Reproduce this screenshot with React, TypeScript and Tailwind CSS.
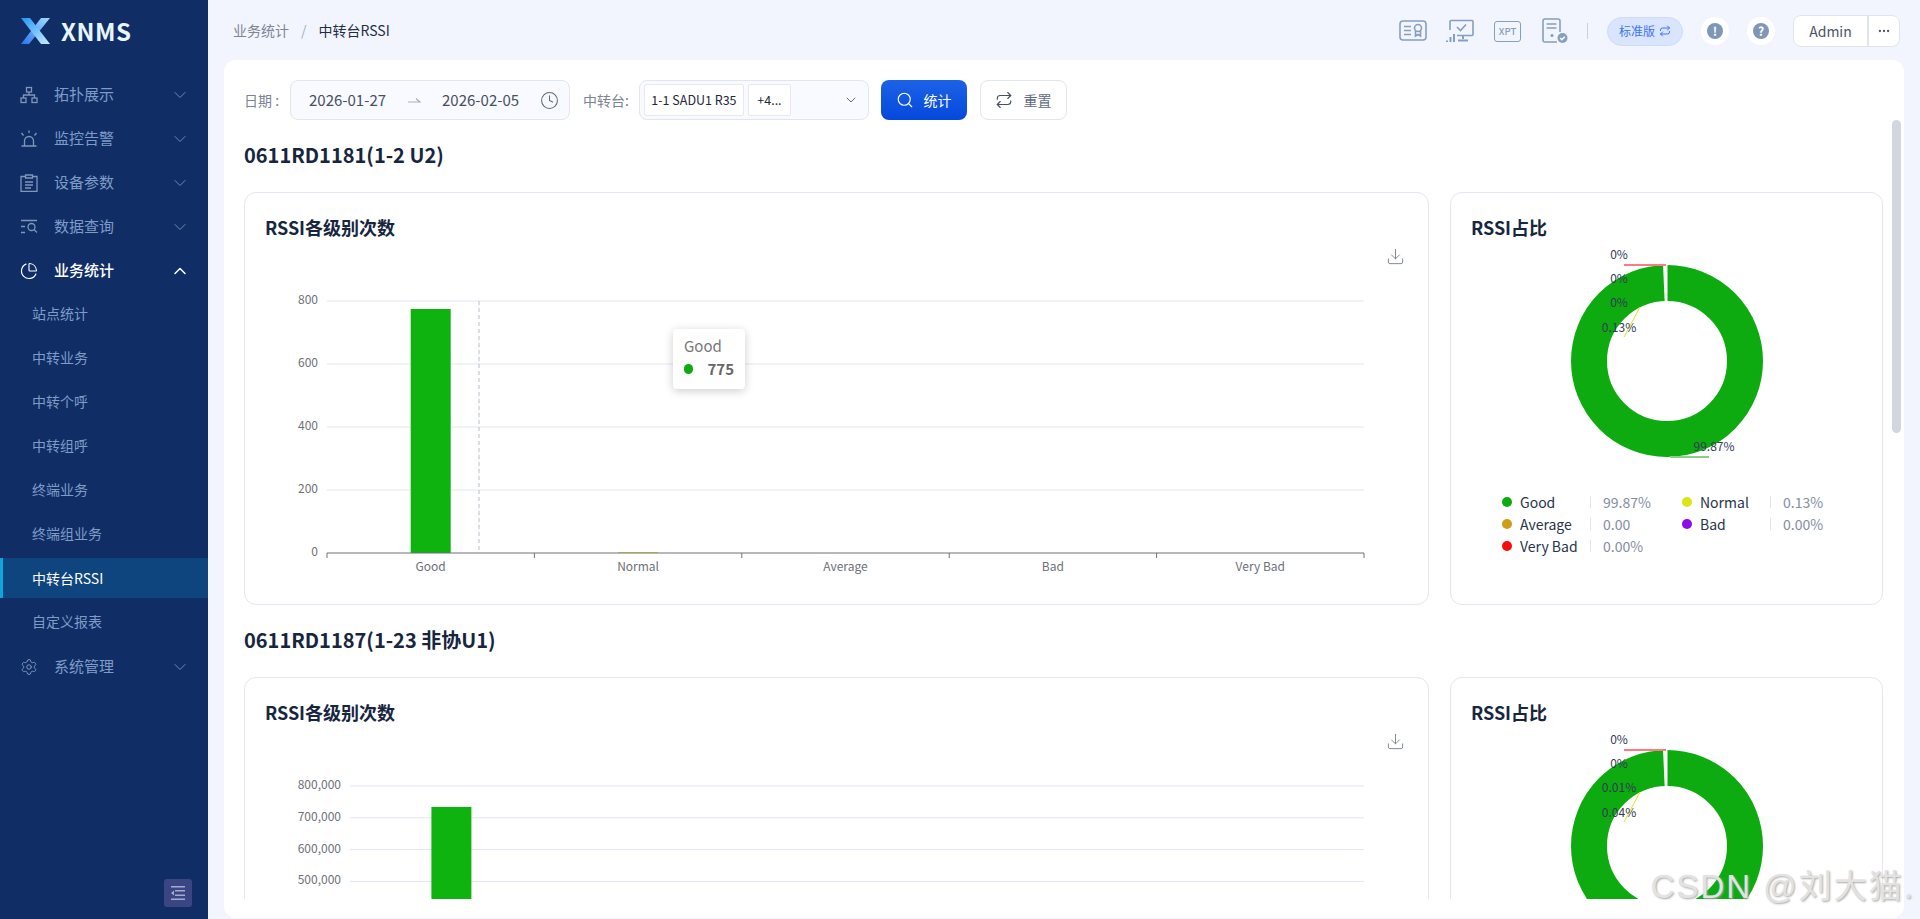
import { ChartPie, ChevronDown, ChevronUp, Clock, Download, Ellipsis, Repeat, Search, Settings } from "lucide-react"

const GREEN = "#0fb30f"

function TopologyIcon() {
  return (
    <svg width="18" height="18" viewBox="0 0 18 18" fill="none" stroke="currentColor" strokeWidth="1.3">
      <rect x="6.5" y="1.5" width="5" height="4.5" />
      <rect x="1" y="12" width="5" height="4.5" />
      <rect x="12" y="12" width="5" height="4.5" />
      <path d="M9 6v3M3.5 12V9h11v3" />
    </svg>
  )
}

function AlarmIcon() {
  return (
    <svg width="18" height="18" viewBox="0 0 18 18" fill="none" stroke="currentColor" strokeWidth="1.3">
      <path d="M4.5 15.5V11a4.5 4.5 0 0 1 9 0v4.5M1.5 16h15M9 .5v2.5M1.5 3l2 2.5M16.5 3l-2 2.5" />
    </svg>
  )
}

function ParamsIcon() {
  return (
    <svg width="18" height="18" viewBox="0 0 18 18" fill="none" stroke="currentColor" strokeWidth="1.3">
      <path d="M5.5 2.5H1v15h16v-15h-4.500M5.500 1h7v3h-7zM5 8h8M5 11h8M5 14h6" />
    </svg>
  )
}

function QueryIcon() {
  return (
    <svg width="18" height="18" viewBox="0 0 18 18" fill="none" stroke="currentColor" strokeWidth="1.3">
      <path d="M1 2.500h16M1 8.500h4M1 14.500h4" />
      <circle cx="11.500" cy="9" r="3.500" />
      <path d="M14 11.500l3 3" />
    </svg>
  )
}

function CollapseIcon() {
  return (
    <svg width="16" height="14" viewBox="0 0 16 14" fill="#a3acd0">
      <rect x="1" y="0" width="14" height="1.500" />
      <rect x="5" y="4" width="10" height="1.500" />
      <rect x="5" y="8.500" width="10" height="1.500" />
      <rect x="1" y="12.500" width="14" height="1.500" />
      <path d="M1 7l3-2.500v5z" />
    </svg>
  )
}

function CertIcon() {
  return (
    <svg width="28" height="22" viewBox="0 0 28 22" fill="none" stroke="#84a0c0" strokeWidth="1.600">
      <rect x="1" y="1" width="26" height="19" rx="3" />
      <path d="M5 6.500h7M5 10.500h7M5 14.500h7" />
      <circle cx="19" cy="8" r="3.500" />
      <path d="M16.500 11v5l2.500-1.500 2.500 1.500v-5" />
    </svg>
  )
}

function MonitorIcon() {
  return (
    <svg width="28" height="24" viewBox="0 0 28 24" fill="none" stroke="#84a0c0" strokeWidth="1.600">
      <path d="M4 11V2.500a1 1 0 0 1 1-1h21a1 1 0 0 1 1 1v13a1 1 0 0 1-1 1H11" />
      <path d="M11 8l3.500 3.500L20 5.500" />
      <path d="M17 17v3M12 21.500h10" strokeWidth="2" />
      <path d="M1 21.500v1.500M4.500 18v5M8 15v8" strokeWidth="2" />
    </svg>
  )
}

function XptIcon() {
  return (
    <div className="flex h-[21px] w-[27px] items-center justify-center rounded-[3px] border-[1.5px] border-[#84a0c0] text-[9.5px] font-medium text-[#84a0c0]">
      XPT
    </div>
  )
}

function ServerCheckIcon() {
  return (
    <svg width="26" height="26" viewBox="0 0 26 26" fill="none" stroke="#84a0c0" strokeWidth="1.600">
      <path d="M15 24H3a2 2 0 0 1-2-2V3a2 2 0 0 1 2-2h13a2 2 0 0 1 2 2v11" />
      <path d="M4.500 6h10M4.500 10h10" />
      <circle cx="10" cy="17.500" r="0.800" fill="#84a0c0" />
      <circle cx="20.500" cy="20" r="5" fill="#84a0c0" stroke="none" />
      <path d="M18.200 20l1.700 1.700 2.800-3" stroke="#fff" />
    </svg>
  )
}

function RoundIconButton({ mark }: { mark: "info" | "help" }) {
  return (
    <div className="flex h-7 w-7 items-center justify-center rounded-full bg-white">
      <div className="flex h-4 w-4 items-center justify-center rounded-full bg-[#7f97b7] text-[12px] leading-none font-bold text-white">
        {mark === "info" ? "!" : "?"}
      </div>
    </div>
  )
}

const menu = [
  { label: "拓扑展示", icon: <TopologyIcon /> },
  { label: "监控告警", icon: <AlarmIcon /> },
  { label: "设备参数", icon: <ParamsIcon /> },
  { label: "数据查询", icon: <QueryIcon /> },
]

const subMenu = ["站点统计", "中转业务", "中转个呼", "中转组呼", "终端业务", "终端组业务", "中转台RSSI", "自定义报表"]

function MenuItem({ label, icon }: { label: string; icon: React.ReactNode }) {
  return (
    <div className="flex h-11 items-center pr-[18px] pl-[20px] text-[15px] text-[#7f9cc6]">
      <span className="flex w-[18px] justify-center text-[#8097b8]">{icon}</span>
      <span className="ml-[16px] flex-1 pb-0.5">{label}</span>
      <ChevronDown size={20} strokeWidth={1.2} className="text-[#7288ad]" />
    </div>
  )
}

function Sidebar() {
  return (
    <aside className="flex h-full w-[208px] shrink-0 flex-col bg-[#102d66]">
      <div className="flex h-[73px] items-start pt-[18px] pl-[21px]">
        <svg width="29" height="26" viewBox="0 0 29 26">
          <defs>
            <linearGradient id="logoA" x1="0" y1="0" x2="1" y2="1">
              <stop offset="0" stopColor="#2196f5" />
              <stop offset="1" stopColor="#c8ecff" />
            </linearGradient>
            <linearGradient id="logoB" x1="1" y1="0" x2="0" y2="1">
              <stop offset="0" stopColor="#9fdcff" />
              <stop offset="1" stopColor="#2a74f0" />
            </linearGradient>
          </defs>
          <polygon points="29,0 20,0 0,26 8,26" fill="url(#logoB)" />
          <polygon points="0,0 9,0 29,26 20,26" fill="url(#logoA)" />
        </svg>
        <span className="ml-[11px] text-[24px] leading-[26px] font-bold tracking-[0.5px] text-[#e6f5ff]">XNMS</span>
      </div>

      {menu.map((item) => (
        <MenuItem key={item.label} {...item} />
      ))}

      <div className="flex h-11 items-center pr-[18px] pl-[20px] text-[15px] font-medium text-white">
        <ChartPie size={18} strokeWidth={1.5} />
        <span className="ml-[16px] flex-1 pb-0.5">业务统计</span>
        <ChevronUp size={20} strokeWidth={1.8} />
      </div>

      {subMenu.map((label) =>
        label === "中转台RSSI" ? (
          <div
            key={label}
            className="mt-px mb-[3px] flex h-10 items-center border-l-[3px] border-[#0ea5d8] bg-[#0f457f] pl-[29px] text-[14px] text-white"
          >
            {label}
          </div>
        ) : (
          <div key={label} className="flex h-11 items-center pb-1 pl-[32px] text-[14px] text-[#7f9cc6]">
            {label}
          </div>
        ),
      )}

      <MenuItem label="系统管理" icon={<Settings size={18} strokeWidth={1.3} />} />

      <div className="mt-auto mr-4 mb-3 flex h-7 w-7 items-center justify-center self-end rounded-[3px] bg-[#3a4583]">
        <CollapseIcon />
      </div>
    </aside>
  )
}

function Header() {
  return (
    <header className="flex h-[60px] shrink-0 items-center pr-5 pl-[25px] text-[14px]">
      <span className="text-[#7d8694]">业务统计</span>
      <span className="mx-[12px] text-[#a8aeb9]">/</span>
      <span className="text-[#1f2d44]">中转台RSSI</span>

      <div className="ml-auto flex items-center pt-0.5">
        <CertIcon />
        <span className="ml-[19px]">
          <MonitorIcon />
        </span>
        <span className="ml-[20px]">
          <XptIcon />
        </span>
        <span className="ml-[21px]">
          <ServerCheckIcon />
        </span>
        <span className="mx-[19px] h-4 w-px bg-[#c5d0e0]" />
        <div className="flex h-[29px] w-[76px] items-center justify-center gap-1 rounded-full border border-[#cfdcf7] bg-[#d9e5fd] text-[12px] text-[#3f74f0]">
          标准版
          <Repeat size={12} strokeWidth={2} />
        </div>
        <span className="ml-[18px]">
          <RoundIconButton mark="info" />
        </span>
        <span className="ml-[18px]">
          <RoundIconButton mark="help" />
        </span>
        <div className="ml-[18px] flex h-8 w-[107px] overflow-hidden rounded-lg border border-[#dfe4ef] bg-white text-[14px] text-[#4b5567]">
          <span className="flex w-[75px] items-center justify-center border-r-2 border-[#dfe4ef]">Admin</span>
          <span className="flex flex-1 items-center justify-center">
            <Ellipsis size={14} />
          </span>
        </div>
      </div>
    </header>
  )
}

function FilterBar() {
  return (
    <div className="flex h-10 items-center text-[14px]">
      <span className="text-[#7c8492]">日期 :</span>
      <div className="ml-[11px] flex h-10 w-[280px] items-center rounded-lg border border-[#e0e5ef] bg-[#f8faff] pr-[10px] pl-[18px] text-[15px] text-[#46505f]">
        <span>2026-01-27</span>
        <svg className="mx-[21px]" width="14" height="8" viewBox="0 0 14 8" fill="none" stroke="#a8aeb9" strokeWidth="1.200">
          <path d="M1 6h12L9 2.500" />
        </svg>
        <span>2026-02-05</span>
        <Clock size={19} strokeWidth={1.3} className="ml-auto text-[#5f6b7c]" />
      </div>

      <span className="ml-[13px] text-[#7c8492]">中转台:</span>
      <div className="ml-[10px] flex h-10 w-[230px] items-center rounded-lg border border-[#e0e5ef] bg-[#f8faff] pr-[9px] pl-1 text-[12.5px] text-[#1f2937]">
        <span className="flex h-8 w-[100px] items-center justify-center rounded-[2px] border border-[#e6e9f1] bg-white">
          1-1 SADU1 R35
        </span>
        <span className="ml-1 flex h-8 w-[43px] items-center justify-center rounded-[2px] border border-[#e6e9f1] bg-white">
          +4...
        </span>
        <ChevronDown size={16} strokeWidth={1.5} className="ml-auto text-[#5f6b7c]" />
      </div>

      <button className="ml-3 flex h-10 w-[86px] items-center justify-center gap-[9px] rounded-lg bg-gradient-to-b from-[#1c62e6] to-[#0548dc] text-[14px] text-white">
        <Search size={18} strokeWidth={1.5} />
        统计
      </button>
      <button className="ml-[13px] flex h-10 w-[87px] items-center justify-center gap-[10px] rounded-lg border border-[#e0e5ef] bg-white text-[14px] text-[#5f6b7c]">
        <Repeat size={18} strokeWidth={1.5} className="text-[#46505f]" />
        重置
      </button>
    </div>
  )
}

const categories = ["Good", "Normal", "Average", "Bad", "Very Bad"]
const CHART_RIGHT = 1119

// full chart with its x axis
function BarChart({ ticks, step, axisX, barY, showPointer }: { ticks: string[]; step: number; axisX: number; barY: number; showPointer?: boolean }) {
  const top = 49
  const band = (CHART_RIGHT - axisX) / categories.length
  const baseY = top + step * (ticks.length - 1)
  return (
    <svg width="1183" height="352" viewBox="0 0 1183 352" className="block">
      {ticks.map((t, i) => {
        const y = top + step * i
        return (
          <g key={t}>
            {i < ticks.length - 1 && <line x1={axisX} x2={CHART_RIGHT} y1={y} y2={y} stroke="#e0e6f1" />}
            <text x={axisX - 9} y={y + 3} textAnchor="end" fontSize="12" fill="#6e7079">
              {t}
            </text>
          </g>
        )
      })}
      {showPointer && <line x1="234" x2="234" y1={top} y2={baseY} stroke="#b9bdcc" strokeDasharray="4 3" />}
      <rect x={axisX + band / 2 - 20} y={barY} width="40" height={baseY - barY} fill={GREEN} />
      <rect x={axisX + band * 1.5 - 20} y={baseY - 1} width="40" height="1" fill="#dde516" />
      <line x1={axisX} x2={CHART_RIGHT} y1={baseY} y2={baseY} stroke="#6e7079" />
      {categories.map((c, i) => (
        <g key={c}>
          <line x1={axisX + band * i} x2={axisX + band * i} y1={baseY} y2={baseY + 5} stroke="#6e7079" />
          <text x={axisX + band * (i + 0.5)} y={baseY + 18} textAnchor="middle" fontSize="12" fill="#6e7079">
            {c}
          </text>
        </g>
      ))}
      <line x1={CHART_RIGHT} x2={CHART_RIGHT} y1={baseY} y2={baseY + 5} stroke="#6e7079" />
    </svg>
  )
}

// second chart: the page is scrolled off below 500,000, so only the top part is there
function TopOfBarChart({ ticks, step, axisX, barY }: { ticks: string[]; step: number; axisX: number; barY: number }) {
  const band = (CHART_RIGHT - axisX) / categories.length
  return (
    <svg width="1183" height="352" viewBox="0 0 1183 352" className="block">
      {ticks.map((t, i) => {
        const y = 49 + step * i
        return (
          <g key={t}>
            <line x1={axisX} x2={CHART_RIGHT} y1={y} y2={y} stroke="#e0e6f1" />
            <text x={axisX - 9} y={y + 3} textAnchor="end" fontSize="12" fill="#6e7079">
              {t}
            </text>
          </g>
        )
      })}
      <rect x={axisX + band / 2 - 20} y={barY} width="40" height={352 - barY} fill={GREEN} />
    </svg>
  )
}

function Donut({ labels, bottomLabel }: { labels: string[]; bottomLabel?: string }) {
  return (
    <svg width="431" height="232" viewBox="0 0 431 232" className="block overflow-visible">
      <circle cx="216" cy="109" r="78" fill="none" stroke="#0dab0f" strokeWidth="36" />
      <polygon points="212,12 216.500,12 216.500,50 213.700,50" fill="#fff" />
      <line x1="173" x2="215" y1="13" y2="13" stroke="#ff7a80" strokeWidth="2" />
      <line x1="173" y1="85" x2="189" y2="55" stroke="#dde516" />
      {bottomLabel && <line x1="219" x2="258" y1="205" y2="205" stroke="#86d186" strokeWidth="2" />}
      {labels.map((l, i) => (
        <text key={i} x="168" y={7 + i * 24.200} textAnchor="middle" fontSize="12" fill="#333a55">
          {l}
        </text>
      ))}
      {bottomLabel && (
        <text x="263" y="199" textAnchor="middle" fontSize="12" fill="#333a55">
          {bottomLabel}
        </text>
      )}
    </svg>
  )
}

const legend = [
  { name: "Good", color: "#0dab0f", share: "99.87%" },
  { name: "Normal", color: "#dde516", share: "0.13%" },
  { name: "Average", color: "#cf9d17", share: "0.00" },
  { name: "Bad", color: "#8b0cf0", share: "0.00%" },
  { name: "Very Bad", color: "#f60d0d", share: "0.00%" },
]

function Legend() {
  return (
    <div className="mt-[7px] grid w-[411px] grid-cols-2 pl-[51px] text-[14px] leading-[22px]">
      {legend.map((s) => (
        <div key={s.name} className="flex h-[22px] w-[180px] items-center">
          <svg width="10" height="10" viewBox="0 0 10 10" className="shrink-0">
            <circle cx="5" cy="5" r="5" fill={s.color} />
          </svg>
          <span className="ml-2 w-[70px] text-[#27344a]">{s.name}</span>
          <span className="h-3 w-px bg-[#dfe4ef]" />
          <span className="ml-3 text-[#838da3]">{s.share}</span>
        </div>
      ))}
    </div>
  )
}

function Section({ title, chart, donut, legendShown }: { title: string; chart: React.ReactNode; donut: React.ReactNode; legendShown?: boolean }) {
  return (
    <section className="mt-6">
      <h2 className="h-6 text-[20px] leading-[22px] font-semibold text-[#17263f]">{title}</h2>
      <div className="mt-6 flex gap-[21px]">
        <div className="relative h-[413px] w-[1185px] rounded-xl border border-[#e4e7f0] bg-white">
          <h3 className="h-[59px] pl-[20px] text-[18px] leading-[68px] font-semibold text-[#17263f]">RSSI各级别次数</h3>
          <Download size={19} strokeWidth={1.2} className="absolute top-[54px] right-[23px] text-[#7c8492]" />
          {chart}
        </div>

        <div className="h-[413px] w-[433px] rounded-xl border border-[#e4e7f0] bg-white">
          <h3 className="h-[59px] pl-[20px] text-[18px] leading-[68px] font-semibold text-[#17263f]">RSSI占比</h3>
          {donut}
          {legendShown && <Legend />}
        </div>
      </div>
    </section>
  )
}

function Tooltip() {
  return (
    <div className="absolute top-[136px] left-[428px] h-[60px] w-[72px] rounded bg-white px-[11px] py-[6px] text-[15px] shadow-[0_2px_10px_rgba(0,0,0,0.2)]">
      <div className="leading-[22px] text-[#777]">Good</div>
      <div className="flex items-center leading-[24px] font-bold text-[#666]">
        <span className="h-[10px] w-[10px] rounded-full bg-[#0dab0f]" />
        <span className="ml-[14px]">775</span>
      </div>
    </div>
  )
}

export default function App() {
  return (
    <div className="relative flex h-screen overflow-hidden bg-[#f2f5fd] font-['Noto_Sans_CJK_SC','Noto_Sans',sans-serif]">
      <Sidebar />
      <main className="flex min-w-0 flex-1 flex-col">
        <Header />
        <div className="mr-4 mb-px ml-4 flex min-h-0 flex-1 rounded-xl bg-white pb-[19px]">
          <div className="min-w-0 flex-1 overflow-hidden pt-5 pl-5">
            <FilterBar />
            <Section
              title="0611RD1181(1-2 U2)"
              chart={
                <>
                  <BarChart ticks={["800", "600", "400", "200", "0"]} step={63} axisX={82} barY={57} showPointer />
                  <Tooltip />
                </>
              }
              donut={<Donut labels={["0%", "0%", "0%", "0.13%"]} bottomLabel="99.87%" />}
              legendShown
            />
            <Section
              title="0611RD1187(1-23 非协U1)"
              chart={<TopOfBarChart ticks={["800,000", "700,000", "600,000", "500,000"]} step={31.8} axisX={105} barY={70} />}
              donut={<Donut labels={["0%", "0%", "0.01%", "0.04%"]} />}
            />
          </div>
          <div className="mt-[60px] mr-[3px] ml-[9px] h-[313px] w-[9px] shrink-0 rounded-full bg-[#d2d6df]" />
        </div>
      </main>
      <div className="absolute right-[5px] bottom-[10px] font-['Liberation_Sans','Noto_Sans_CJK_SC',sans-serif] text-[33px] leading-[44px] tracking-[2px] text-[#e2e2e2] [text-shadow:1px_1px_2px_#a8a8a8]">
        CSDN @刘大猫.
      </div>
    </div>
  )
}
